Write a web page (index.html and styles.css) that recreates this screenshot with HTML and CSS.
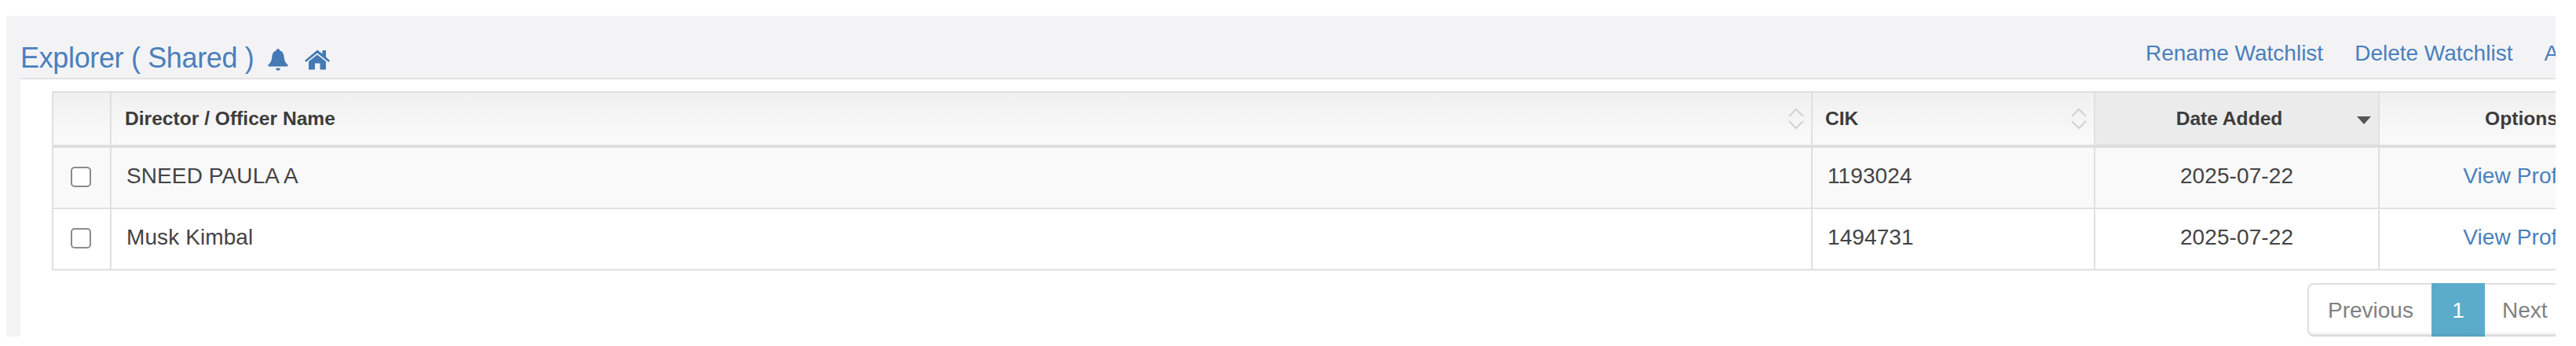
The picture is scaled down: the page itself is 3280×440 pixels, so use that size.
FILE: index.html
```
<!DOCTYPE html>

<html>
	<head>
		<meta charset="utf-8">
		<title>Watchlist</title>
		<link rel="stylesheet" href="styles.css">
	</head>
	
	<body>
		<div class="page">
			<div class="header">
				<div class="title">
					<a>Explorer ( Shared )</a>
					<svg class="bell" viewBox="0 0 26 28">
						<path d="M13 0c1.300 0 2 .9 2.200 2.300 3.500 1 5 3.700 5.400 7.700.4 4.500 1.400 7.500 4.900 10.500V22.500H.5V20.500c3.500-3 4.500-6 4.900-10.500.4-4 1.900-6.700 5.400-7.700C11 .9 11.700 0 13 0zM10 24.800h6c-.4 2-1.500 3-3 3s-2.600-1-3-3z"/>
					</svg>
					<svg class="home" viewBox="0 0 32 26">
						<path d="M16 0.500 L22.500 5.500 V1 H27 V9.500 L32 14 30.500 15.900 16 4.500 1.500 15.900 0 14z"/>
						<path d="M16 6.500 L27 15.200 V25.500 H19.500 V17.500 H13 V25.500 H5 V15.200z"/>
					</svg>
				</div>
				<div class="links">
					<a>Rename Watchlist</a>
					<a>Delete Watchlist</a>
					<a>Add</a>
				</div>
			</div>
			
			<div class="content">
				<table class="watchlist">
					<colgroup>
						<col class="colCheck">
						<col class="colName">
						<col class="colCik">
						<col class="colDate">
						<col class="colOptions">
					</colgroup>
					<thead>
						<tr>
							<th></th>
							<th class="name">
								<div class="sortable">Director / Officer Name
									<svg class="sort" viewBox="0 0 20 28"><path d="M1 11 L10 2 19 11M1 17 L10 26 19 17"/></svg>
								</div>
							</th>
							<th>
								<div class="sortable">CIK
									<svg class="sort" viewBox="0 0 20 28"><path d="M1 11 L10 2 19 11M1 17 L10 26 19 17"/></svg>
								</div>
							</th>
							<th class="sorted">
								<div class="sortable"><span>Date Added</span>
									<i class="arrow"></i>
								</div>
							</th>
							<th class="center">Options</th>
						</tr>
					</thead>
					<tbody>
						<tr class="odd">
							<td class="check"><input type="checkbox"></td>
							<td class="name">SNEED PAULA A</td>
							<td>1193024</td>
							<td class="center">2025-07-22</td>
							<td class="center"><a>View Profile</a></td>
						</tr>
						<tr>
							<td class="check"><input type="checkbox"></td>
							<td class="name">Musk Kimbal</td>
							<td>1494731</td>
							<td class="center">2025-07-22</td>
							<td class="center"><a>View Profile</a></td>
						</tr>
					</tbody>
				</table>
				
				<div class="pagination">
					<a class="previous">Previous</a>
					<a class="current">1</a>
					<a class="next">Next</a>
				</div>
			</div>
		</div>
	</body>
</html>
```
FILE: styles.css
```
body {
	margin: 0;
	padding: 20px 26px 12px 8px;
	background-color: #fff;
	font-family: 'Liberation Sans', Arial, sans-serif;
	font-size: 28px;
	color: #444;
}

a {
	color: #4a80bb;
	text-decoration: none;
}

.page {
	height: 408px;
	overflow: hidden;
	background-color: #f3f3f6;
}

/*Title bar*/
.header {
	display: flex;
	justify-content: space-between;
	height: 79px;
	white-space: nowrap;
}

.title {
	display: flex;
	align-items: flex-start;
	padding-left: 18px;
	font-size: 36px;
	letter-spacing: -0.35px;
	line-height: 40px;
}

.title a {
	margin-top: 34px;
}

.title svg {
	fill: #4579b4;
}

.bell {
	width: 26px;
	height: 28px;
	margin: 42px 0 0 18px;
}

.home {
	width: 32px;
	height: 26px;
	margin: 43px 0 0 21px;
}

.links {
	display: flex;
	flex: none;
	gap: 40px;
	width: 522px;
	padding-top: 32px;
	line-height: 32px;
}

/*The table*/
.content {
	height: 327px;
	margin-left: 18px;
	border-top: 2px solid #e2e2e3;
	background-color: #fff;
}

.watchlist {
	table-layout: fixed;
	width: 3327px;
	margin: 15px 0 0 40px;
	border-collapse: separate;
	border-spacing: 0;
	border-top: 2px solid #dfdfdf;
	border-left: 2px solid #e0e0e0;
}

.colCheck {
	width: 74px;
}

.colName {
	width: 2166px;
}

.colCik {
	width: 360px;
}

.colDate {
	width: 362px;
}

.colOptions {
	width: 363px;
}

th, td {
	box-sizing: border-box;
	padding: 0 16px;
	vertical-align: top;
	text-align: left;
	border-right: 2px solid #e0e0e0;
	white-space: nowrap;
}

th {
	height: 70px;
	font-size: 24.6px;
	line-height: 66px;
	color: #3c3c3c;
	border-bottom: 4px solid #dedede;
	background: linear-gradient(#f0f0f0, #fafafa);
}

td {
	height: 78px;
	padding-left: 19px;
	line-height: 72px;
	letter-spacing: 0.1px;
	border-bottom: 2px solid #e0e0e0;
}

th.name {
	padding-left: 17px;
}

.odd td {
	background-color: #f9f9f9;
}

.center, td.center {
	padding-left: 16px;
	text-align: center;
}

.sorted {
	background: #ebebeb;
}

.sortable {
	display: flex;
	align-items: center;
	justify-content: space-between;
	height: 66px;
}

.sorted span {
	flex: 1;
	text-align: center;
	margin-right: 8px;
}

.sort {
	width: 20px;
	height: 28px;
	margin-right: -7px;
	fill: none;
	stroke: #d2d2d2;
	stroke-width: 2;
}

.arrow {
	margin: 3px -7px 0 0;
	border: 9px solid transparent;
	border-top: 10px solid #555;
	border-bottom: 0;
}

td.check {
	padding: 24px 0 0 22px;
	line-height: 0;
}

.check input {
	appearance: none;
	box-sizing: border-box;
	width: 26px;
	height: 26px;
	margin: 0;
	border: 2px solid #8b8b8b;
	border-radius: 5px;
	background-color: #fff;
}

/*Page buttons*/
.pagination {
	display: flex;
	box-sizing: border-box;
	width: 400px;
	height: 68px;
	margin: 16px 0 0 2912px;
	border: 2px solid #e0e0e0;
	border-bottom-color: #d9d9d9;
	border-radius: 8px;
	box-shadow: inset 0 -4px 3px -2px #e6e6e6;
	line-height: 66px;
}

.pagination a {
	color: #808080;
}

.previous {
	width: 132px;
	padding-left: 24px;
}

.pagination .current {
	width: 68px;
	height: 68px;
	margin-top: -2px;
	line-height: 70px;
	text-align: center;
	color: #fff;
	background: linear-gradient(#5bacca 62px, #579fbc);
}

.next {
	padding-left: 22px;
}
```
